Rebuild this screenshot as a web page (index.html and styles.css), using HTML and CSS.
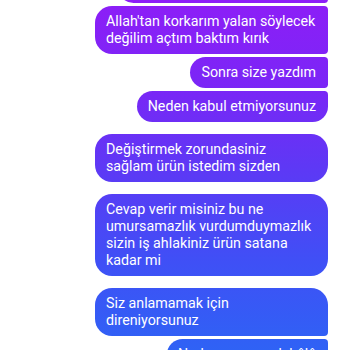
FILE: index.html
```html
<!DOCTYPE html>
<html lang="tr">
<head>
  <meta charset="UTF-8">
  <meta name="viewport" content="width=device-width, initial-scale=1.0">
  <title>Mesajlar</title>
  <link rel="stylesheet" href="styles.css">
</head>
<body>
  <div class="sohbet">
    <div class="grup">
      <div class="balon ilk">Ürün kutudan kırık çıktı</div>
      <div class="balon">Allah'tan korkarım yalan söylecek değilim açtım baktım kırık</div>
      <div class="balon">Sonra size yazdım</div>
      <div class="balon">Neden kabul etmiyorsunuz</div>
    </div>
    <div class="grup">
      <div class="balon">Değiştirmek zorundasiniz sağlam ürün istedim sizden</div>
    </div>
    <div class="grup">
      <div class="balon">Cevap verir misiniz bu ne umursamazlık vurdumduymazlık sizin iş ahlakiniz ürün satana kadar mi</div>
    </div>
    <div class="grup">
      <div class="balon">Siz anlamamak için direniyorsunuz</div>
      <div class="balon">Neden cevap yok hâlâ</div>
    </div>
  </div>
</body>
</html>
```

FILE: styles.css
```css
body {
  margin: 0;
  background: #fff;
  font-family: Roboto, "Noto Sans", sans-serif;
  overflow: hidden;
}
.sohbet {
  display: flex;
  flex-direction: column;
  align-items: flex-end;
  gap: 12px;
  padding-right: 22px;
  margin-top: -28px;
}
.grup {
  display: flex;
  flex-direction: column;
  align-items: flex-end;
  gap: 3px;
}
.balon {
  max-width: 233px;
  box-sizing: border-box;
  padding: 7px 12px 7px 11px;
  font-size: 14.25px;
  line-height: 17px;
  color: #fff;
  border-radius: 17px;
  background: linear-gradient(to bottom, #8d1ef7 0, #7a26f6 25%, #5b3af5 50%, #3f50f6 75%, #2f62f5 100%);
  background-attachment: fixed;
}
.grup .balon + .balon {
  border-top-right-radius: 4px;
}
.grup .balon:not(:last-child) {
  border-bottom-right-radius: 4px;
}
.ilk {
  width: 210px;
  white-space: nowrap;
}
```
